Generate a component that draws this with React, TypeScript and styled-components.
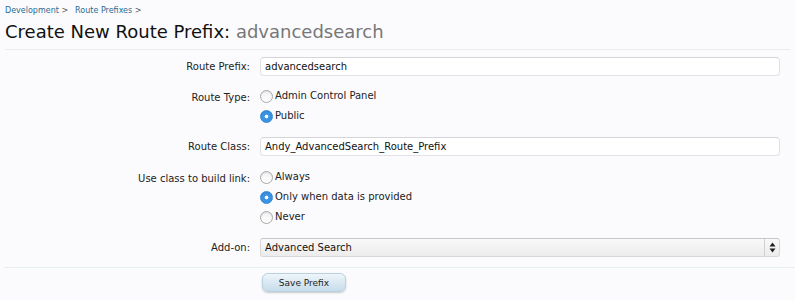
import React from "react"
import styled, { createGlobalStyle } from "styled-components"

const GlobalStyle = createGlobalStyle`
  html, body {
    margin: 0;
    padding: 0;
    background: #ffffff;
  }
  body {
    font-family: "DejaVu Sans", Verdana, sans-serif;
    font-size: 10px;
    color: #333;
  }
`

const Page = styled.div`
  width: 795px;
  height: 300px;
  overflow: hidden;
  background: #fbfbfd;
`

const Header = styled.div`
  background: #fbfbfd;
  padding: 5px 5px 0 5px;
`

const Breadcrumb = styled.div`
  display: flex;
  gap: 2px;
  font-size: 8px;
  line-height: 11px;
  height: 12px;
`

const Crumb = styled.a`
  color: #2b6a93;
  text-decoration: none;
  &:after {
    content: " >";
    color: #555;
    margin-right: 5px;
  }
`

const Title = styled.h1`
  margin: 3px 0 0 0;
  font-weight: normal;
  font-size: 18px;
  line-height: 24px;
  color: #111;
  padding-bottom: 5px;
  border-bottom: 1px solid #ececf0;
`

const Muted = styled.span`
  color: #777;
`

const Form = styled.form`
  padding: 7px 0 0 0;
`

const Row = styled.div<{ $top?: number }>`
  display: grid;
  grid-template-columns: 250px 1fr;
  column-gap: 10px;
  margin-top: ${props => props.$top ?? 0}px;
  padding-right: 15px;
`

const Label = styled.div`
  text-align: right;
  color: #222;
  line-height: 19px;
`

const TextInput = styled.div`
  height: 17px;
  border: 1px solid #e2e2e6;
  border-top-color: #d6d6da;
  border-radius: 4px;
  background: #fff;
  padding: 0 4px;
  line-height: 17px;
  color: #111;
`

const Options = styled.div`
  display: flex;
  flex-direction: column;
  gap: 4px;
`

const Option = styled.label`
  display: flex;
  align-items: center;
  gap: 2px;
  height: 16px;
  line-height: 16px;
  color: #222;
`

const Radio = styled.span<{ $checked?: boolean }>`
  box-sizing: border-box;
  width: 13px;
  height: 13px;
  border-radius: 50%;
  border: 1px solid ${props => (props.$checked ? "#2f86d8" : "#a8a8a8")};
  background: ${props =>
    props.$checked
      ? "radial-gradient(circle, #fff 0 1.6px, #3a93e4 2.2px)"
      : "linear-gradient(#f0f0f0, #ffffff)"};
  box-shadow: inset 0 1px 1px rgba(0, 0, 0, 0.08);
`

const Select = styled.div`
  position: relative;
  height: 17px;
  border: 1px solid #d8d8d8;
  border-top-color: #c6c6c6;
  border-radius: 3px;
  background: linear-gradient(#f9f9f9, #ececec);
  padding: 0 4px;
  line-height: 17px;
  color: #111;
`

const SelectArrow = styled.span`
  position: absolute;
  right: 0;
  top: 0;
  bottom: 0;
  width: 14px;
  border-left: 1px solid #d0d0d0;
  display: flex;
  align-items: center;
  justify-content: center;
`

const Divider = styled.div`
  margin: 10px 0 0 4px;
  border-top: 1px solid #e8eff3;
`

const Actions = styled.div`
  padding: 5px 0 0 262px;
`

const Button = styled.button`
  width: 84px;
  height: 19px;
  border: 1px solid #b8d2e2;
  border-radius: 6px;
  background: linear-gradient(#eef5fa, #c6dcea);
  box-shadow: 0 1px 2px rgba(0, 0, 0, 0.2);
  font-family: inherit;
  font-size: 9px;
  color: #222;
  padding: 0;
`

const App = () => {
  return (
    <Page>
      <GlobalStyle />
      <Header>
        <Breadcrumb>
          <Crumb href="#">Development</Crumb>
          <Crumb href="#">Route Prefixes</Crumb>
        </Breadcrumb>
        <Title>
          Create New Route Prefix: <Muted>advancedsearch</Muted>
        </Title>
      </Header>
      <Form>
        <Row>
          <Label>Route Prefix:</Label>
          <TextInput>advancedsearch</TextInput>
        </Row>
        <Row $top={12}>
          <Label>Route Type:</Label>
          <Options>
            <Option>
              <Radio />
              Admin Control Panel
            </Option>
            <Option>
              <Radio $checked />
              Public
            </Option>
          </Options>
        </Row>
        <Row $top={13}>
          <Label>Route Class:</Label>
          <TextInput>Andy_AdvancedSearch_Route_Prefix</TextInput>
        </Row>
        <Row $top={13}>
          <Label>Use class to build link:</Label>
          <Options>
            <Option>
              <Radio />
              Always
            </Option>
            <Option>
              <Radio $checked />
              Only when data is provided
            </Option>
            <Option>
              <Radio />
              Never
            </Option>
          </Options>
        </Row>
        <Row $top={13}>
          <Label>Add-on:</Label>
          <Select>
            Advanced Search
            <SelectArrow>
              <svg width="7" height="11" viewBox="0 0 7 11">
                <path d="M3.5 0.5 L6.5 4.5 H0.5 Z" fill="#222" />
                <path d="M3.5 10.5 L6.5 6.5 H0.5 Z" fill="#222" />
              </svg>
            </SelectArrow>
          </Select>
        </Row>
        <Divider />
        <Actions>
          <Button type="button">Save Prefix</Button>
        </Actions>
      </Form>
    </Page>
  )
}

export default App
